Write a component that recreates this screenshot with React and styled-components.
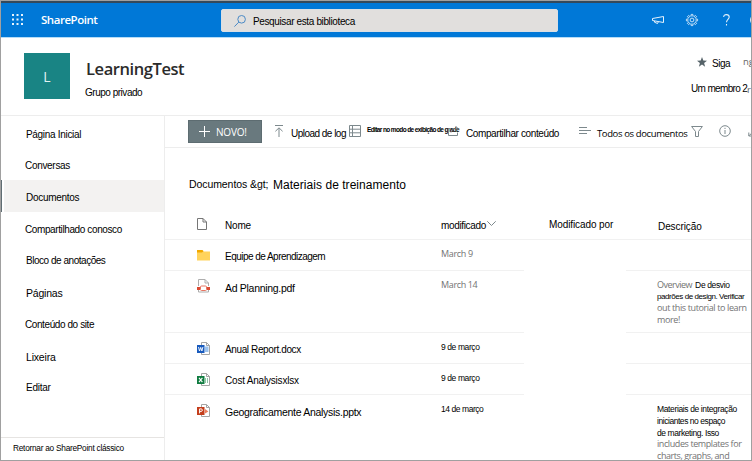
import React from "react";
import styled, { createGlobalStyle } from "styled-components";

const GlobalStyle = createGlobalStyle`
  * { box-sizing: border-box; }
  body { margin: 0; background: #fff; }
`;

const faces = {
  ui: '"Liberation Sans", Arial, sans-serif',
  soft: '"Open Sans", "Noto Sans", sans-serif',
};

const Text = styled.span`
  display: block;
  white-space: nowrap;
  font-family: ${(p) => faces[p.$face || "ui"]};
  font-size: ${(p) => p.$size || 10}px;
  font-weight: ${(p) => p.$weight || 400};
  letter-spacing: ${(p) => p.$track || 0}px;
  line-height: ${(p) => p.$line || 14}px;
  color: ${(p) => p.$color || "#000"};
  margin-top: ${(p) => p.$mt || 0}px;
`;

const Frame = styled.div`
  width: 752px;
  height: 461px;
  overflow: hidden;
  border: 1px solid #a0a0a0;
  background: #fff;
  display: grid;
  grid-template-columns: 750px;
  grid-template-rows: 37px 77px 1fr;
`;

const SuiteBar = styled.header`
  display: grid;
  grid-template-columns: 11px 29px 180px 337px 94px 34px 37px 27px 1px;
  align-items: start;
  background: #0078d7;
  border-top: 2px solid #34495b;
  border-bottom: 1px solid #b5dcf7;
`;

const Glyph = styled.svg`
  display: block;
  width: ${(p) => p.$w}px;
  height: ${(p) => p.$h || p.$w}px;
  margin-top: ${(p) => p.$mt || 0}px;
  margin-left: ${(p) => p.$ml || 0}px;
  fill: none;
  stroke: ${(p) => p.$stroke || "#7d898d"};
  overflow: visible;
`;

const SearchBox = styled.div`
  display: flex;
  height: 23px;
  margin-top: 6px;
  padding-left: 12px;
  gap: 7px;
  background: #e1dfdd;
  border-radius: 2px;
  border: 1px solid #d9dfe5;
`;

const SiteHeader = styled.section`
  display: grid;
  grid-template-columns: 23px 46px 15px 1fr 60px;
  align-items: start;
`;

const SiteLogo = styled.div`
  grid-column: 2;
  width: 46px;
  height: 46px;
  margin-top: 15px;
  padding-top: 17px;
  background: #198484;
  display: flex;
  justify-content: center;
`;

const SiteTitle = styled.div`
  grid-column: 4;
`;

const TitleRow = styled.div`
  padding-left: 1px;
`;

const SiteActions = styled.div`
  margin-top: 18px;
`;

const ActionLine = styled.div`
  display: grid;
  grid-template-columns: ${(p) => p.$cols};
  height: ${(p) => p.$h}px;
  align-items: start;
`;

const Body = styled.div`
  display: grid;
  grid-template-columns: 164px 1fr;
  border-top: 1px solid #ededed;
  min-height: 0;
`;

const Sidebar = styled.nav`
  display: grid;
  grid-template-rows: 1fr 23px;
  border-right: 1px solid #ededed;
`;

const NavList = styled.div`
  display: grid;
  padding-top: 1px;
  grid-template-rows: 31px 32px 32px 31px 32px 32px 32px 31px 31px;
`;

const NavItem = styled.a`
  padding: 11px 0 0 ${(p) => p.$inset}px;
  background: ${(p) => (p.$active ? "#f3f2f1" : "transparent")};
  box-shadow: ${(p) => (p.$active ? "inset 1px 0 #5f6d73, inset 3px 0 #fff" : "none")};
`;

const ClassicLink = styled.a`
  border-top: 1px solid #e6e4e2;
  padding: 3px 0 0 12px;
`;

const Main = styled.main`
  min-width: 0;
  overflow: hidden;
`;

const CommandBar = styled.div`
  display: grid;
  grid-template-columns: 86px 17px 58px 18px 80px 19px 113px 18px 93px 28px 28px 1fr;
  align-items: start;
  height: 32px;
  padding: 4px 0 0 23px;
  border-bottom: 1px solid #ededed;
`;

const NewButton = styled.button`
  display: flex;
  width: 74px;
  height: 23px;
  padding: 0 0 0 10px;
  gap: 6px;
  border: 1px solid #5d6c71;
  background: #69797e;
`;

const Breadcrumb = styled.div`
  display: grid;
  grid-template-columns: 84px 1fr;
  align-items: start;
  padding: 28px 0 0 24px;
  height: 57px;
`;

const Row = styled.div`
  display: grid;
  grid-template-columns: 60px 216px 83px 102px 1fr;
  height: ${(p) => p.$h}px;
`;

const Cell = styled.div`
  padding: ${(p) => p.$top || 0}px 0 0 ${(p) => p.$left || 0}px;
  border-bottom: 1px solid ${(p) => (p.$plain ? "transparent" : "#f1f1f1")};
`;

const DescLine = styled.div`
  display: flex;
  height: ${(p) => p.$pitch}px;
  gap: 3px;
`;

const SortLabel = styled.div`
  display: flex;
`;

const DocPage = ({ band }) => (
  <>
    <path d="M4.5 .5h5l3 3v9h-8z" fill="#fff" stroke="#a5a5a5" />
    <path d="M9.5 .5v3h3" stroke="#a5a5a5" />
    {band}
  </>
);

const OfficeIcon = ({ kind }) => {
  const color = { W: "#185abd", X: "#107c41", P: "#c43e1c" }[kind];
  const letter = {
    W: <path d="M1.5 5l1 4 1.2-3.6L4.9 9l1-4" strokeWidth=".9" />,
    X: <path d="M2 4.8l3.4 4.4M5.4 4.8L2 9.2" strokeWidth="1.1" />,
    P: <path d="M2.6 9.4V4.9h1.5a1.2 1.2 0 010 2.5H2.6" strokeWidth="1" />,
  }[kind];
  const detail = {
    W: <path d="M8 4.500h3.500v5.500H8z" fill="#9cc3ee" stroke="none" />,
    X: <path d="M8.5 5v5M10.5 5v5" stroke="#8cc7a5" />,
    P: <path d="M8 5l3.4 2.4L8 9.6z" fill="#ed7d5c" stroke="none" />,
  }[kind];
  return (
    <Glyph $w={13} $ml={32} viewBox="0 0 13 13">
      <DocPage band={detail} />
      <rect x="0" y="3" width="7.5" height="8" fill={color} stroke="none" />
      <g stroke="#fff">{letter}</g>
    </Glyph>
  );
};

const PdfIcon = () => (
  <Glyph $w={13} $h={14} $ml={32} viewBox="0 0 13 14">
    <path d="M1.500 7V.5h6.500l3.500 3.500v3M1.500 11v2h10v-2M8 .5V4h3.500" fill="#fff" stroke="#adadad" />
    <rect x="0" y="8" width="3" height="3" fill="#dc4a32" stroke="none" />
    <rect x="10" y="8" width="3" height="3" fill="#dc4a32" stroke="none" />
    <rect x="3.500" y="7" width="6" height="4.500" rx="1" fill="#fff" stroke="#e77561" />
  </Glyph>
);

const FolderIcon = () => (
  <Glyph $w={13} $h={11} $ml={32} viewBox="0 0 13 11">
    <path d="M0 0h5.5l1.2 1.3L5.5 3H0z" fill="#f2a900" stroke="none" />
    <path d="M0 2.6h5.2l1.4-1.2H13V10.5H0z" fill="#ffd35c" stroke="none" />
  </Glyph>
);

const navItems = [
  { label: "Página Inicial", track: -0.31 },
  { label: "Conversas", track: -0.31, inset: 24 },
  { label: "Documentos", track: -0.28, active: true },
  { label: "Compartilhado conosco", track: -0.39, inset: 24 },
  { label: "Bloco de anotações", track: -0.47 },
  { label: "Páginas", track: -0.2, size: 10.5 },
  { label: "Conteúdo do site", track: -0.41, inset: 24 },
  { label: "Lixeira", track: -0.19, size: 10.5 },
  { label: "Editar", track: -0.24 },
];

const gray = "#737373";

const files = [
  {
    h: 31, icon: <FolderIcon />, iconTop: 10,
    name: { text: "Equipe de Aprendizagem", track: -0.53 },
    date: { text: "March 9", track: -0.34, english: true },
  },
  {
    h: 62, icon: <PdfIcon />, iconTop: 8, pitch: 11.5,
    name: { text: "Ad Planning.pdf", track: -0.3, size: 10.5 },
    date: { text: "March 14", track: -0.36, english: true },
    lines: [
      [{ text: "Overview", track: -0.49, english: true }, { text: "De desvio", track: -0.37 }],
      [{ text: "padrões de design. Verificar", track: -0.43, size: 8 }],
      [{ text: "out this tutorial to learn", track: -0.38, english: true }],
      [{ text: "more!", track: -0.4, english: true }],
    ],
  },
  {
    h: 31, icon: <OfficeIcon kind="W" />, iconTop: 9,
    name: { text: "Anual Report.docx", track: -0.38 },
    date: { text: "9 de março", track: -0.4 },
  },
  {
    h: 31, icon: <OfficeIcon kind="X" />, iconTop: 9,
    name: { text: "Cost Analysisxlsx", track: -0.2 },
    date: { text: "9 de março", track: -0.4 },
  },
  {
    h: 66, last: true, icon: <OfficeIcon kind="P" />, iconTop: 9, pitch: 11.75,
    name: { text: "Geograficamente Analysis.pptx", track: -0.29, size: 10.5 },
    date: { text: "14 de março", track: -0.44 },
    lines: [
      [{ text: "Materiais de integração", track: -0.37 }],
      [{ text: "iniciantes no espaço", track: -0.45 }],
      [{ text: "de marketing. Isso", track: -0.42 }],
      [{ text: "includes templates for", track: -0.41, english: true }],
      [{ text: "charts, graphs, and", track: -0.42, english: true }],
    ],
  },
];

const SmallText = ({ run }) => (
  <Text
    $face={run.english ? "soft" : "ui"}
    $size={run.english ? 9 : run.size || 8.5}
    $color={run.english ? gray : "#000"}
    $track={run.track}
  >
    {run.text}
  </Text>
);

function FileRow({ file }) {
  return (
    <Row $h={file.h}>
      <Cell $top={file.iconTop} $plain={file.last}>{file.icon}</Cell>
      <Cell $top={10} $plain={file.last}>
        <Text $size={file.name.size} $track={file.name.track}>{file.name.text}</Text>
      </Cell>
      <Cell $top={7} $plain={file.last}><SmallText run={file.date} /></Cell>
      <Cell $plain />
      <Cell $top={7} $left={31} $plain={file.last}>
        {(file.lines || []).map((line, i) => (
          <DescLine key={i} $pitch={file.pitch}>
            {line.map((run) => <SmallText key={run.text} run={run} />)}
          </DescLine>
        ))}
      </Cell>
    </Row>
  );
}

const gearTeeth = Array.from({ length: 8 }, (_, i) => i * 45);

export default function App() {
  return (
    <>
      <GlobalStyle />
      <Frame>
        <SuiteBar>
          <span />
          <Glyph $w={11} $mt={11} viewBox="0 0 11 11">
            {[0, 4.5, 9].map((y) => [0, 4.5, 9].map((x) => (
              <rect key={`${x}-${y}`} x={x} y={y} width="2" height="2" fill="#e8f3fc" stroke="none" />
            )))}
          </Glyph>
          <Text $face="soft" $size={11.5} $weight={600} $track={-0.47} $color="#fff" $mt={10}>SharePoint</Text>
          <SearchBox>
            <Glyph $w={12} $mt={5} viewBox="0 0 12 12" $stroke="#4a8ac6">
              <circle cx="7.6" cy="4.3" r="3.8" />
              <path d="M4.8 7.1L.4 11.6" />
            </Glyph>
            <Text $track={-0.37} $mt={5}>Pesquisar esta biblioteca</Text>
          </SearchBox>
          <Glyph $w={12} $h={8} $mt={13} $ml={94} viewBox="0 0 12 8" $stroke="#e6f2fc">
            <path d="M11.5 .5v6L.5 4.5v-2z" />
            <path d="M2.5 5v1.2l3 1.3.8-1.6" />
          </Glyph>
          <Glyph $w={12} $mt={11} $ml={34} viewBox="0 0 12 12" $stroke="#d9ebfa">
            {gearTeeth.map((a) => (
              <path key={a} d="M5 1.6L5.2.4h1.6L7 1.6" strokeWidth=".9" transform={`rotate(${a} 6 6)`} />
            ))}
            <circle cx="6" cy="6" r="4.2" strokeWidth=".8" />
            <circle cx="6" cy="6" r="1.9" strokeWidth=".9" />
          </Glyph>
          <Glyph $w={7} $h={12} $mt={11} $ml={37} viewBox="0 0 7 12" $stroke="#e6f2fc">
            <path d="M.7 3C.7 1.4 1.8.6 3.4.6S6.2 1.6 6.2 3c0 2.2-2.7 2.5-2.7 5.2M3.5 10v1.4" strokeWidth="1.1" />
          </Glyph>
          <Glyph $w={12} $mt={11} $ml={27} viewBox="0 0 12 12" $stroke="#d9ebfa">
            <circle cx="6" cy="6" r="5.5" />
          </Glyph>
        </SuiteBar>

        <SiteHeader>
          <SiteLogo>
            <Text $face="soft" $size={14} $color="#e4f1f1">L</Text>
          </SiteLogo>
          <SiteTitle>
            <TitleRow>
              <Text $face="soft" $size={16.5} $weight={600} $track={-0.42} $line={20} $color="#2b2b2b" $mt={21}>LearningTest</Text>
            </TitleRow>
            <Text $track={-0.48} $mt={7}>Grupo privado</Text>
          </SiteTitle>
          <SiteActions>
            <ActionLine $cols="6px 15px 31px 1fr" $h={26}>
              <span />
              <Glyph $w={10} $mt={1} viewBox="0 0 10 10">
                <path d="M5 0l1.3 3.5L10 3.7 7.1 6l1 3.8L5 7.6 1.9 9.8l1-3.8L0 3.7l3.7-.2z" fill="#566369" stroke="none" />
              </Glyph>
              <Text $track={-0.5} $mt={1}>Siga</Text>
              <Text $face="soft" $size={9.5} $color="#666" $mt={-1}>ng</Text>
            </ActionLine>
            <ActionLine $cols="56px 1fr" $h={14}>
              <Text $track={-0.65}>Um membro 2</Text>
              <Text $face="soft" $size={9.5} $color="#666" $mt={1}>r</Text>
            </ActionLine>
          </SiteActions>
        </SiteHeader>

        <Body>
          <Sidebar>
            <NavList>
              {navItems.map((n) => (
                <NavItem key={n.label} $inset={n.inset || 25} $active={n.active}>
                  <Text $size={n.size} $track={n.track}>{n.label}</Text>
                </NavItem>
              ))}
            </NavList>
            <ClassicLink>
              <Text $size={8.3} $track={-0.26}>Retornar ao SharePoint clássico</Text>
            </ClassicLink>
          </Sidebar>

          <Main>
            <CommandBar>
              <NewButton>
                <Glyph $w={11} $mt={5} viewBox="0 0 11 11" $stroke="#fff">
                  <path d="M5.5 0v11M0 5.5h11" />
                </Glyph>
                <Text $face="soft" $track={-0.2} $color="#fff" $mt={4}>NOVO!</Text>
              </NewButton>
              <Glyph $w={10} $h={12} $mt={5} viewBox="0 0 10 12">
                <path d="M1 .5h8M5 12V3.2M1.4 6.3L5 2.8l3.6 3.5" />
              </Glyph>
              <Text $track={-0.52} $mt={7}>Upload de log</Text>
              <Glyph $w={12} $mt={5} viewBox="0 0 12 12">
                <path d="M.5 .5h11v11H.5zM3.5 .5v11M.5 4.2h11M.5 7.8h11" />
              </Glyph>
              <Text $size={6.5} $track={-0.62} $weight={700} $mt={3}>Editar no modo de exibição de grade</Text>
              <Glyph $w={12} $h={11} $mt={5} $ml={1} viewBox="0 0 12 11">
                <path d="M3 3.5H.5v7h9v-3M3 7.5c.5-2.5 2-4 6-4M7.5 1l2.5 2.5L7.5 6" />
              </Glyph>
              <Text $track={-0.39} $mt={7}>Compartilhar conteúdo</Text>
              <Glyph $w={12} $h={8} $mt={7} viewBox="0 0 12 8">
                <path d="M0 .5h8M0 3.5h12M0 6.5h8" />
              </Glyph>
              <Text $face="soft" $size={9.5} $track={-0.38} $mt={7}>Todos os documentos</Text>
              <Glyph $w={12} $h={11} $mt={6} $ml={1} viewBox="0 0 12 11">
                <path d="M.6 .5h10.8L7.5 5.5v5h-3v-5z" />
              </Glyph>
              <Glyph $w={12} $mt={5} $ml={1} viewBox="0 0 12 12">
                <circle cx="6" cy="6" r="5.3" />
                <path d="M6 5v4M6 2.8v1.2" />
              </Glyph>
              <Glyph $w={10} $mt={7} $ml={2} viewBox="0 0 10 10">
                <path d="M.8 5.5V9h3.5M1 8.800L9 .8" />
              </Glyph>
            </CommandBar>

            <Breadcrumb>
              <Text $size={10.5} $track={-0.08} $mt={1}>Documentos &amp;gt;</Text>
              <Text $size={12} $track={0.04} $mt={2}>Materiais de treinamento</Text>
            </Breadcrumb>

            <Row $h={35}>
              <Cell $top={13} $left={32}>
                <Glyph $w={10} $h={12} viewBox="0 0 10 12" $stroke="#767676">
                  <path d="M.5 .5h5.5l3.5 3.5v7.5h-9zM6 .5V4h3.5" />
                </Glyph>
              </Cell>
              <Cell $top={14}><Text $track={-0.17}>Nome</Text></Cell>
              <Cell $top={14}>
                <SortLabel>
                  <Text $track={-0.35}>modificado</Text>
                  <Glyph $w={9} $h={5} $mt={2} $ml={1} viewBox="0 0 9 5"><path d="M.3 .3l4.200 4.200L8.700 .3" /></Glyph>
                </SortLabel>
              </Cell>
              <Cell $top={13} $left={25}><Text $track={-0.1}>Modificado por</Text></Cell>
              <Cell $top={15} $left={32}><Text $track={-0.08}>Descrição</Text></Cell>
            </Row>
            {files.map((f) => <FileRow key={f.name.text} file={f} />)}
          </Main>
        </Body>
      </Frame>
    </>
  );
}
